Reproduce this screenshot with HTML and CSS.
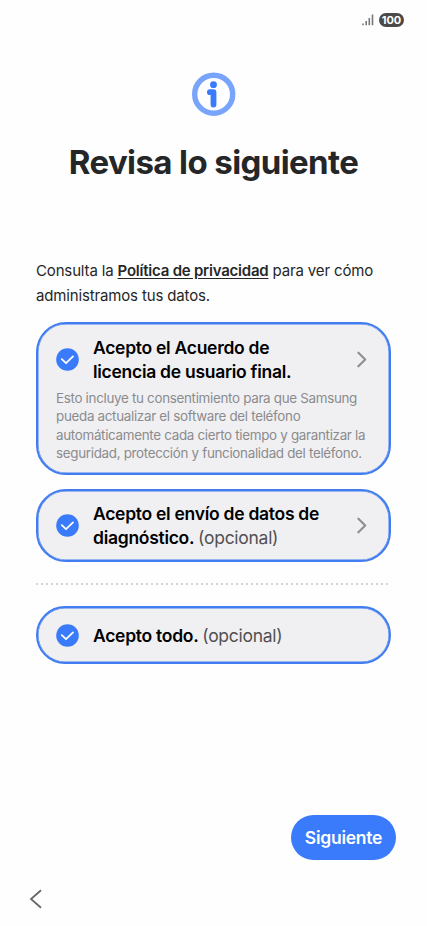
FILE: index.html
```html
<!DOCTYPE html>
<html lang="es">

<head>
    <meta charset="UTF-8">
    <meta name="viewport" content="width=device-width, initial-scale=1.0">
    <title>Revisa lo siguiente</title>
    <link rel="stylesheet" href="styles.css">
</head>

<body>
    <div class="screen">
        <div class="status-bar">
            <svg class="signal" width="12" height="12" viewBox="0 0 12 12">
                <path d="M1 9.5V11.3M4.2 7V11.3M7.3 4V11.3M10.5 0.5V11.3" stroke="#777" stroke-width="1.6" fill="none"/>
            </svg>
            <span class="battery">100</span>
        </div>

        <header class="header">
            <svg class="info-icon" width="44" height="44" viewBox="0 0 44 44">
                <circle cx="21.7" cy="22.2" r="19" fill="none" stroke="#78a5fb" stroke-width="5.4"/>
                <circle cx="21.5" cy="12.7" r="3.4" fill="#397bfb"/>
                <path d="M17.9 20.2H21.5V32.6" fill="none" stroke="#397bfb" stroke-width="5.8" stroke-linecap="round" stroke-linejoin="round"/>
            </svg>
            <h1>Revisa lo siguiente</h1>
        </header>

        <main class="content">
            <p class="intro">Consulta la <a class="policy">Política de privacidad</a> para ver cómo<br>administramos tus datos.</p>

            <div class="card card-license">
                <div class="card-row">
                    <svg class="check" width="23" height="23" viewBox="0 0 23 23">
                        <circle cx="11.5" cy="11.5" r="11.3" fill="#397bfb"/>
                        <path d="M5.8 11.2L10 15.2L17 8.4" fill="none" stroke="#fff" stroke-width="1.8" stroke-linecap="round" stroke-linejoin="round"/>
                    </svg>
                    <div class="card-title">Acepto el Acuerdo de<br>licencia de usuario final.</div>
                    <svg class="arrow" width="10" height="17" viewBox="0 0 10 17">
                        <path d="M1.4 1.7L8.2 8.5L1.4 15.3" fill="none" stroke="#8e8e90" stroke-width="2.1" stroke-linecap="round" stroke-linejoin="round"/>
                    </svg>
                </div>
                <p class="card-text">Esto incluye tu consentimiento para que Samsung<br>pueda actualizar el software del teléfono<br>automáticamente cada cierto tiempo y garantizar la<br>seguridad, protección y funcionalidad del teléfono.</p>
            </div>

            <div class="card card-diagnostic">
                <div class="card-row">
                    <svg class="check" width="23" height="23" viewBox="0 0 23 23">
                        <circle cx="11.5" cy="11.5" r="11.3" fill="#397bfb"/>
                        <path d="M5.8 11.2L10 15.2L17 8.4" fill="none" stroke="#fff" stroke-width="1.8" stroke-linecap="round" stroke-linejoin="round"/>
                    </svg>
                    <div class="card-title">Acepto el envío de datos de<br>diagnóstico. <span class="optional">(opcional)</span></div>
                    <svg class="arrow" width="10" height="17" viewBox="0 0 10 17">
                        <path d="M1.4 1.7L8.2 8.5L1.4 15.3" fill="none" stroke="#8e8e90" stroke-width="2.1" stroke-linecap="round" stroke-linejoin="round"/>
                    </svg>
                </div>
            </div>

            <div class="divider"></div>

            <div class="card card-all">
                <div class="card-row">
                    <svg class="check" width="23" height="23" viewBox="0 0 23 23">
                        <circle cx="11.5" cy="11.5" r="11.3" fill="#397bfb"/>
                        <path d="M5.8 11.2L10 15.2L17 8.4" fill="none" stroke="#fff" stroke-width="1.8" stroke-linecap="round" stroke-linejoin="round"/>
                    </svg>
                    <div class="card-title">Acepto todo. <span class="optional">(opcional)</span></div>
                </div>
            </div>
        </main>

        <footer class="footer">
            <button class="next-btn">Siguiente</button>
            <svg class="back" width="14" height="20" viewBox="0 0 14 20">
                <path d="M12 1.2L2 10L12 18.8" fill="none" stroke="#686868" stroke-width="1.8"/>
            </svg>
        </footer>
    </div>
</body>

</html>
```
FILE: styles.css
```css
* {
    box-sizing: border-box;
}

body {
    margin: 0;
    background: #fefefe;
    color: #252627;
    font-family: Inter, Roboto, sans-serif;
}

.screen {
    display: flex;
    flex-direction: column;
    width: 427px;
    height: 926px;
    overflow: hidden;
    white-space: nowrap;
}

.status-bar {
    display: flex;
    justify-content: flex-end;
    align-items: center;
    gap: 5px;
    height: 40px;
    padding-right: 23px;
}

.battery {
    width: 25px;
    height: 14px;
    border-radius: 7px;
    background: #4a4a4a;
    color: #fff;
    font-size: 11px;
    font-weight: 700;
    line-height: 14px;
    text-align: center;
}

.header {
    display: flex;
    flex-direction: column;
    align-items: center;
    height: 218px;
    padding-top: 32px;
}

.header h1 {
    margin: 25px 0 0;
    font-size: 33px;
    font-weight: 650;
    line-height: 42px;
    letter-spacing: -0.6px;
}

.content {
    padding: 0 36px;
}

.intro {
    height: 64px;
    margin: 0;
    font-size: 15px;
    line-height: 25px;
    letter-spacing: -0.15px;
}

.policy {
    font-weight: 600;
    letter-spacing: -0.22px;
    text-decoration: underline;
    text-underline-offset: 2px;
}

.card {
    padding: 0 22px 0 18px;
    border: 2px solid #417df0;
    border-radius: 30px;
    background: #f0f0f3;
    box-shadow: inset 0 0 0 0.5px #417df0;
}

.card-license {
    height: 153px;
    padding-top: 11px;
}

.card-diagnostic {
    height: 73px;
    margin-top: 14px;
    padding-top: 10px;
}

.card-all {
    height: 58px;
    padding-top: 15px;
}

.card-row {
    display: flex;
    align-items: center;
}

.check {
    margin-right: 14px;
}

.card-title {
    flex: 1;
    padding-top: 1px;
    color: #000;
    font-size: 17.5px;
    font-weight: 600;
    line-height: 23.5px;
    letter-spacing: -0.28px;
}

.optional {
    color: #505052;
    font-weight: 400;
}

.card-text {
    margin: 6px 0 0;
    color: #8b8b8d;
    font-size: 13.4px;
    line-height: 18.3px;
    letter-spacing: -0.31px;
}

.divider {
    height: 2px;
    margin: 21px 3px 21px 0;
    background: repeating-linear-gradient(to right, #d4d4d4 0 2px, transparent 2px 5px);
}

.footer {
    display: flex;
    flex-direction: column;
    margin-top: auto;
    padding: 0 31px 17px 29px;
}

.next-btn {
    align-self: flex-end;
    width: 105px;
    height: 45px;
    margin-bottom: 29px;
    padding: 0;
    border: 0;
    border-radius: 23px;
    background: #397bfb;
    color: #fff;
    font-family: inherit;
    font-size: 17.5px;
    font-weight: 600;
    letter-spacing: -0.25px;
}
```
